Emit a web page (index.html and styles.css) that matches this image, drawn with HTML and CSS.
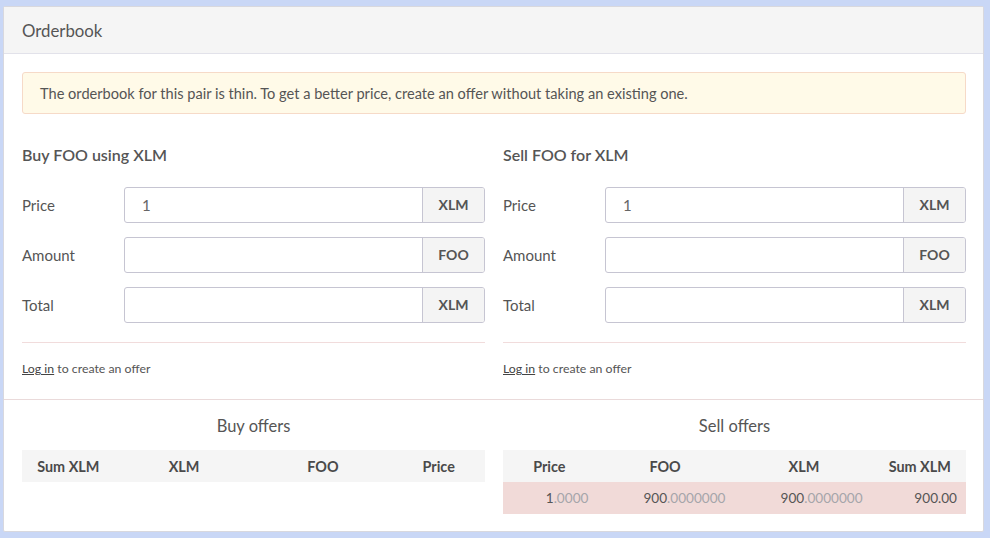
FILE: index.html
```html
<!DOCTYPE html>
<html>
<head>
<meta charset="utf-8">
<link rel="stylesheet" href="styles.css">
</head>
<body>
<div class="card">
  <div class="card-header">Orderbook</div>
  <div class="card-body">
    <div class="alert">The orderbook for this pair is thin. To get a better price, create an offer without taking an existing one.</div>
    <div class="forms">
      <div class="form">
        <h3 class="form-title">Buy FOO using XLM</h3>
        <div class="row"><span class="label">Price</span><div class="input"><span class="value">1</span><span class="addon">XLM</span></div></div>
        <div class="row"><span class="label">Amount</span><div class="input"><span class="value"></span><span class="addon">FOO</span></div></div>
        <div class="row"><span class="label">Total</span><div class="input"><span class="value"></span><span class="addon">XLM</span></div></div>
        <div class="rule"></div>
        <p class="login"><a class="link">Log in</a> to create an offer</p>
      </div>
      <div class="form">
        <h3 class="form-title">Sell FOO for XLM</h3>
        <div class="row"><span class="label">Price</span><div class="input"><span class="value">1</span><span class="addon">XLM</span></div></div>
        <div class="row"><span class="label">Amount</span><div class="input"><span class="value"></span><span class="addon">FOO</span></div></div>
        <div class="row"><span class="label">Total</span><div class="input"><span class="value"></span><span class="addon">XLM</span></div></div>
        <div class="rule"></div>
        <p class="login"><a class="link">Log in</a> to create an offer</p>
      </div>
    </div>
  </div>
  <div class="offers">
    <div class="side">
      <h3 class="side-title">Buy offers</h3>
      <div class="table">
        <div class="thead"><span class="c s">Sum XLM</span><span class="c l">XLM</span><span class="c l">FOO</span><span class="c s">Price</span></div>
      </div>
    </div>
    <div class="side">
      <h3 class="side-title">Sell offers</h3>
      <div class="table">
        <div class="thead"><span class="c s">Price</span><span class="c l">FOO</span><span class="c l">XLM</span><span class="c s">Sum XLM</span></div>
        <div class="trow sell"><span class="c s">1<i>.0000</i></span><span class="c l">900<i>.0000000</i></span><span class="c l">900<i>.0000000</i></span><span class="c s">900.00</span></div>
      </div>
    </div>
  </div>
</div>
</body>
</html>
```
FILE: styles.css
```css
* { box-sizing: border-box; }
html, body { margin: 0; height: 100%; }
body {
  background: #c9d7f6;
  padding: 6px 6px 0 3px;
  font-family: "Lato", "Liberation Sans", sans-serif;
  color: #555;
}
.card {
  width: 981px;
  height: 526px;
  background: #fff;
  border: 1px solid #d8d8de;
  border-radius: 2px;
}
.card-header {
  height: 47px;
  background: #f5f5f5;
  border-bottom: 1px solid #e2e2ea;
  padding-left: 18px;
  font-size: 16.8px;
  line-height: 48px;
  color: #555;
}
.card-body { padding: 18px 17px 0 18px; }
.alert {
  height: 42px;
  background: #fffae8;
  border: 1px solid #f6dac8;
  border-radius: 3px;
  padding: 0 17px;
  font-size: 14.6px;
  line-height: 42px;
  color: #555;
}
.forms {
  display: grid;
  grid-template-columns: 463px 463px;
  column-gap: 18px;
  padding-top: 29px;
}
.form-title {
  margin: 0 0 20px;
  font-size: 16px;
  font-weight: 600;
  line-height: 24px;
  color: #555;
}
.row {
  display: flex;
  align-items: center;
  height: 36px;
  margin-bottom: 14px;
}
.label {
  width: 102px;
  font-size: 15px;
}
.input {
  flex: 1;
  display: flex;
  height: 36px;
  border: 1px solid #c6c5d2;
  border-radius: 3px;
  overflow: hidden;
}
.value {
  flex: 1;
  padding-left: 17px;
  font-size: 15px;
  line-height: 34px;
  color: #666;
}
.addon {
  width: 62px;
  background: #f4f4f4;
  border-left: 1px solid #c6c5d2;
  text-align: center;
  font-size: 14px;
  font-weight: 700;
  line-height: 34px;
  color: #555;
}
.rule {
  height: 1px;
  background: #f1dcdc;
  margin-top: 19px;
}
.login {
  margin: 17px 0 0;
  font-size: 12.3px;
  line-height: 18px;
  color: #555;
}
.link { text-decoration: underline; color: #444; }
.offers {
  margin-top: 21px;
  border-top: 1px solid #eadada;
  display: grid;
  grid-template-columns: 463px 463px;
  column-gap: 18px;
  padding: 0 17px 0 18px;
}
.side-title {
  margin: 0;
  text-align: center;
  font-size: 16.5px;
  font-weight: 400;
  line-height: 24px;
  padding-top: 14px;
  margin-bottom: 12px;
  color: #555;
}
.thead, .trow {
  display: flex;
  height: 32px;
  align-items: center;
}
.thead { background: #f5f5f5; font-weight: 700; font-size: 14.4px; color: #4a4a4a; }
.thead .c { text-align: center; }
.trow .c { text-align: right; padding-right: 9px; font-size: 13.6px; color: #555; }
.trow.sell { background: #f1dad8; }
.c.s { flex: 2; }
.c.l { flex: 3; }
.trow i { font-style: normal; color: #a5a5aa; }
```
